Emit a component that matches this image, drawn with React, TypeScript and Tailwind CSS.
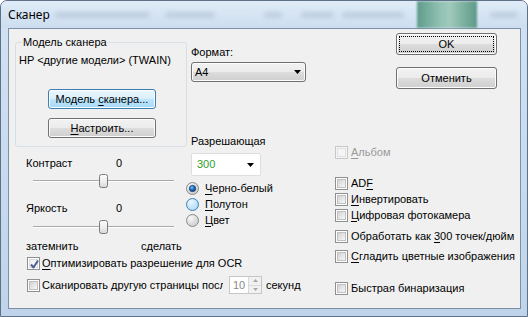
import React from "react";

const font = "font-['Liberation_Sans',Arial,sans-serif]";

function U({ children }: { children: React.ReactNode }) {
  return <span className="underline decoration-1 underline-offset-[2px]">{children}</span>;
}

function WinButton({
  children,
  hot,
  focused,
  className = "",
}: {
  children: React.ReactNode;
  hot?: boolean;
  focused?: boolean;
  className?: string;
}) {
  const skin = hot
    ? "border-[#3c7fb1] bg-[linear-gradient(#eaf6fd,#d9f0fc_50%,#bee6fd_50%,#a7d9f5)]"
    : "border-[#707070] bg-[linear-gradient(#f2f2f2,#ebebeb_50%,#dddddd_50%,#cfcfcf)]";
  return (
    <div className={`flex shrink-0 rounded-[3px] border p-[2px] shadow-[inset_0_0_0_1px_#fcfcfc] ${skin} ${className}`}>
      <div className={`flex flex-1 items-center justify-center whitespace-nowrap ${focused ? "border border-dotted border-black" : ""}`}>
        <span>{children}</span>
      </div>
    </div>
  );
}

function Check({ checked, disabled }: { checked?: boolean; disabled?: boolean }) {
  return (
    <span
      className={`relative flex h-[13px] w-[13px] shrink-0 items-center justify-center border ${
        disabled ? "border-[#c8c8c8] bg-[#f4f4f4]" : "border-[#8e8f8f] bg-white"
      }`}
    >
      <span
        className={`h-[9px] w-[9px] border ${
          disabled
            ? "border-[#e2e2e2] bg-[#f4f4f4]"
            : checked
            ? "border-[#dcdcdc] bg-[linear-gradient(135deg,#ececec,#ffffff)]"
            : "border-[#c0c0c0] bg-[linear-gradient(135deg,#d2d2d2,#f8f8f8)]"
        }`}
      />
      {checked && (
        <svg className="absolute left-[1px] top-[1px]" width="11" height="11" viewBox="0 0 11 11">
          <path d="M2 5.5 L4.5 8.5 L9 1.5" fill="none" stroke="#4a5f97" strokeWidth="2" strokeLinejoin="round" />
        </svg>
      )}
    </span>
  );
}

function CheckRow({
  children,
  checked,
  disabled,
  className = "",
}: {
  children: React.ReactNode;
  checked?: boolean;
  disabled?: boolean;
  className?: string;
}) {
  return (
    <div className={`ml-[1px] flex h-[16px] shrink-0 items-center gap-[3px] whitespace-nowrap ${disabled ? "text-[#9a9a9a]" : ""} ${className}`}>
      <Check checked={checked} disabled={disabled} />
      <span>{children}</span>
    </div>
  );
}

function Radio({ state }: { state: "on" | "hot" | "off" }) {
  const id = `r-${state}`;
  return (
    <svg width="13" height="13" viewBox="0 0 13 13" className="shrink-0">
      <defs>
        <radialGradient id={`${id}-bg`} cx="0.35" cy="0.3" r="0.8">
          {state === "hot" ? (
            <>
              <stop offset="0" stopColor="#eaf6fe" />
              <stop offset="1" stopColor="#a9d8f8" />
            </>
          ) : (
            <>
              <stop offset="0" stopColor="#f8f8f8" />
              <stop offset="1" stopColor="#c9c9c9" />
            </>
          )}
        </radialGradient>
        <radialGradient id={`${id}-dot`} cx="0.4" cy="0.35" r="0.7">
          <stop offset="0" stopColor="#7fc3f4" />
          <stop offset="0.5" stopColor="#1e6fbf" />
          <stop offset="1" stopColor="#123a6c" />
        </radialGradient>
      </defs>
      <circle cx="6.5" cy="6.5" r="6" fill={`url(#${id}-bg)`} stroke={state === "hot" ? "#3c7fb1" : "#8a8a8a"} />
      {state === "on" && <circle cx="6.5" cy="6.5" r="3.2" fill={`url(#${id}-dot)`} stroke="#0f3560" strokeWidth="0.6" />}
    </svg>
  );
}

function Slider({ className = "" }: { className?: string }) {
  return (
    <div className={`relative flex h-[14px] w-[141px] shrink-0 justify-center ${className}`}>
      <div className="absolute inset-x-0 top-[6px] h-[2px] border-t border-[#a9a9a9] bg-white" />
      <svg className="relative" width="9" height="14" viewBox="0 0 9 14">
        <defs>
          <linearGradient id="thumb" x1="0" y1="0" x2="0" y2="1">
            <stop offset="0" stopColor="#fbfbfb" />
            <stop offset="0.6" stopColor="#ececec" />
            <stop offset="1" stopColor="#d4d4d4" />
          </linearGradient>
        </defs>
        <rect x="0.5" y="0.5" width="8" height="13" rx="2" fill="url(#thumb)" stroke="#7a7a7a" />
      </svg>
    </div>
  );
}

function Arrow() {
  return (
    <svg width="7" height="4" viewBox="0 0 7 4" className="shrink-0">
      <path d="M0 0H7L3.5 4Z" fill="#000" />
    </svg>
  );
}

function Spin() {
  return (
    <div className="flex h-[18px] w-[33px] shrink-0 border border-[#c6c6c6] bg-white">
      <span className="flex-1 pl-[3px] leading-[16px] text-[#8a8a8a]">10</span>
      <div className="flex w-[13px] flex-col border-l border-[#d9d9d9] bg-[#f1f1f1]">
        <div className="flex flex-1 items-center justify-center border-b border-[#d9d9d9]">
          <svg width="5" height="3" viewBox="0 0 5 3"><path d="M0 3H5L2.5 0Z" fill="#a8a8a8" /></svg>
        </div>
        <div className="flex flex-1 items-center justify-center">
          <svg width="5" height="3" viewBox="0 0 5 3"><path d="M0 0H5L2.5 3Z" fill="#a8a8a8" /></svg>
        </div>
      </div>
    </div>
  );
}

function TitleBar() {
  return (
    <div className="flex h-[27px] shrink-0 items-center bg-[linear-gradient(#dfebf7,#cddef0)]">
      <span className="ml-[7px] w-[47px] shrink-0 font-['Noto_Sans',sans-serif] text-[12px] leading-[16px] text-black">
        Сканер
      </span>
      <span className="h-[6px] w-[95px] shrink-0 rounded-full bg-[#a3b6cb]/45 blur-[2px]" />
      <span className="ml-[15px] h-[6px] w-[50px] shrink-0 rounded-full bg-[#a3b6cb]/45 blur-[2px]" />
      <span className="ml-[49px] h-[6px] w-[18px] shrink-0 rounded-full bg-[#a3b6cb]/45 blur-[2px]" />
      <span className="ml-[19px] h-[6px] w-[33px] shrink-0 rounded-full bg-[#a3b6cb]/45 blur-[2px]" />
      <span className="ml-[8px] h-[6px] w-[62px] shrink-0 rounded-full bg-[#a3b6cb]/45 blur-[2px]" />
      <span className="ml-[13px] h-full w-[60px] shrink-0 bg-[linear-gradient(90deg,#5f9c8a,#93c2b4_40%,#9fc9bb_55%,#5c9986)] blur-[1px]" />
      <span className="ml-[13px] h-[6px] w-[28px] shrink-0 rounded-full bg-[#a3b6cb]/45 blur-[2px]" />
    </div>
  );
}

export default function App() {
  return (
    <div
      className={`flex h-[317px] w-[528px] flex-col overflow-hidden rounded-t-[7px] border border-[#5f7187] bg-[linear-gradient(#d2e2f3,#bfd4eb)] text-[11px] leading-[13px] text-black ${font}`}
    >
      <TitleBar />
      <div className="ml-[7px] mr-[6px] flex h-[281px] shrink-0 items-start border border-[#7e90a6] bg-[#f0f0f0] pl-[6px]">
        {/* left column */}
        <div className="mt-[7px] flex w-[172px] shrink-0 flex-col">
          <fieldset className="h-[111px] rounded-[3px] border border-[#d5dfe5] px-[3px]">
            <legend className="ml-[3px] px-[1px] leading-[13px]">Модель сканера</legend>
            <div className="mt-[5px] whitespace-nowrap">HP &lt;другие модели&gt; (TWAIN)</div>
            <WinButton hot className="ml-[29px] mt-[22px] h-[20px] w-[108px]">
              Модель <U>с</U>канера...
            </WinButton>
            <WinButton className="ml-[29px] mt-[9px] h-[20px] w-[108px]">
              <U>Н</U>астроить...
            </WinButton>
          </fieldset>

          <div className="ml-[11px] mt-[10px] flex">
            <span className="w-[90px] shrink-0">Контраст</span>
            <span>0</span>
          </div>
          <Slider className="ml-[18px] mt-[4px]" />
          <div className="ml-[11px] mt-[14px] flex">
            <span className="w-[90px] shrink-0">Яркость</span>
            <span>0</span>
          </div>
          <Slider className="ml-[18px] mt-[5px]" />
          <div className="ml-[11px] mt-[6px] flex whitespace-nowrap">
            <span className="w-[115px] shrink-0">затемнить</span>
            <span>сделать</span>
          </div>

          <div className="ml-[12px] mt-[4px] flex items-center gap-[2px] whitespace-nowrap">
            <Check checked />
            <span className="shrink-0">
              <U>О</U>птимизировать разрешение для OCR
            </span>
          </div>
          <div className="ml-[12px] mt-[6px] flex h-[18px] items-center whitespace-nowrap">
            <Check />
            <span className="ml-[2px] w-[181px] shrink-0 overflow-hidden">
              Сканировать <U>д</U>ругую страницы после
            </span>
            <div className="ml-[6px] shrink-0">
              <Spin />
            </div>
            <span className="ml-[4px] shrink-0">секунд</span>
          </div>
        </div>

        {/* middle column */}
        <div className="mt-[17px] flex w-[147px] shrink-0 flex-col">
          <span className="ml-[4px]">Формат:</span>
          <div className="ml-[4px] mt-[3px] flex h-[20px] w-[115px] items-center justify-between rounded-[3px] border border-[#707070] bg-[linear-gradient(#f2f2f2,#ebebeb_50%,#dddddd_50%,#cfcfcf)] pl-[3px] pr-[4px] shadow-[inset_0_0_0_1px_#fcfcfc]">
            <span>A4</span>
            <Arrow />
          </div>
          <span className="ml-[4px] mt-[53px]">Разрешающая</span>
          <div className="ml-[4px] mt-[5px] flex h-[23px] w-[70px] items-center justify-between rounded-[2px] border border-[#dedede] bg-white pl-[5px] pr-[6px]">
            <span className="text-[#2f9f2f]">300</span>
            <Arrow />
          </div>
          <div className="-ml-[1px] mt-[4px] flex flex-col">
            <div className="flex h-[16px] items-center gap-[6px] whitespace-nowrap">
              <Radio state="on" />
              <span>
                <U>Ч</U>ерно-белый
              </span>
            </div>
            <div className="flex h-[16px] items-center gap-[6px] whitespace-nowrap">
              <Radio state="hot" />
              <span>
                <U>П</U>олутон
              </span>
            </div>
            <div className="flex h-[16px] items-center gap-[6px] whitespace-nowrap">
              <Radio state="off" />
              <span>
                <U>Ц</U>вет
              </span>
            </div>
          </div>
        </div>

        {/* right column */}
        <div className="mt-[4px] flex flex-1 flex-col">
          <WinButton focused className="ml-[62px] h-[22px] w-[101px]">
            OK
          </WinButton>
          <WinButton className="ml-[62px] mt-[12px] h-[22px] w-[101px]">Отменить</WinButton>
          <CheckRow disabled className="mt-[55px]">
            <U>А</U>льбом
          </CheckRow>
          <CheckRow className="mt-[15px]">
            AD<U>F</U>
          </CheckRow>
          <CheckRow>
            <U>И</U>нвертировать
          </CheckRow>
          <CheckRow>
            <U>Ц</U>ифровая фотокамера
          </CheckRow>
          <CheckRow className="mt-[5px]">
            Обработать как <U>3</U>00 точек/дюйм
          </CheckRow>
          <CheckRow className="mt-[4px]">
            <U>С</U>гладить цветные изображения
          </CheckRow>
          <CheckRow className="mt-[16px]">Быстрая бинаризация</CheckRow>
        </div>
      </div>
    </div>
  );
}
